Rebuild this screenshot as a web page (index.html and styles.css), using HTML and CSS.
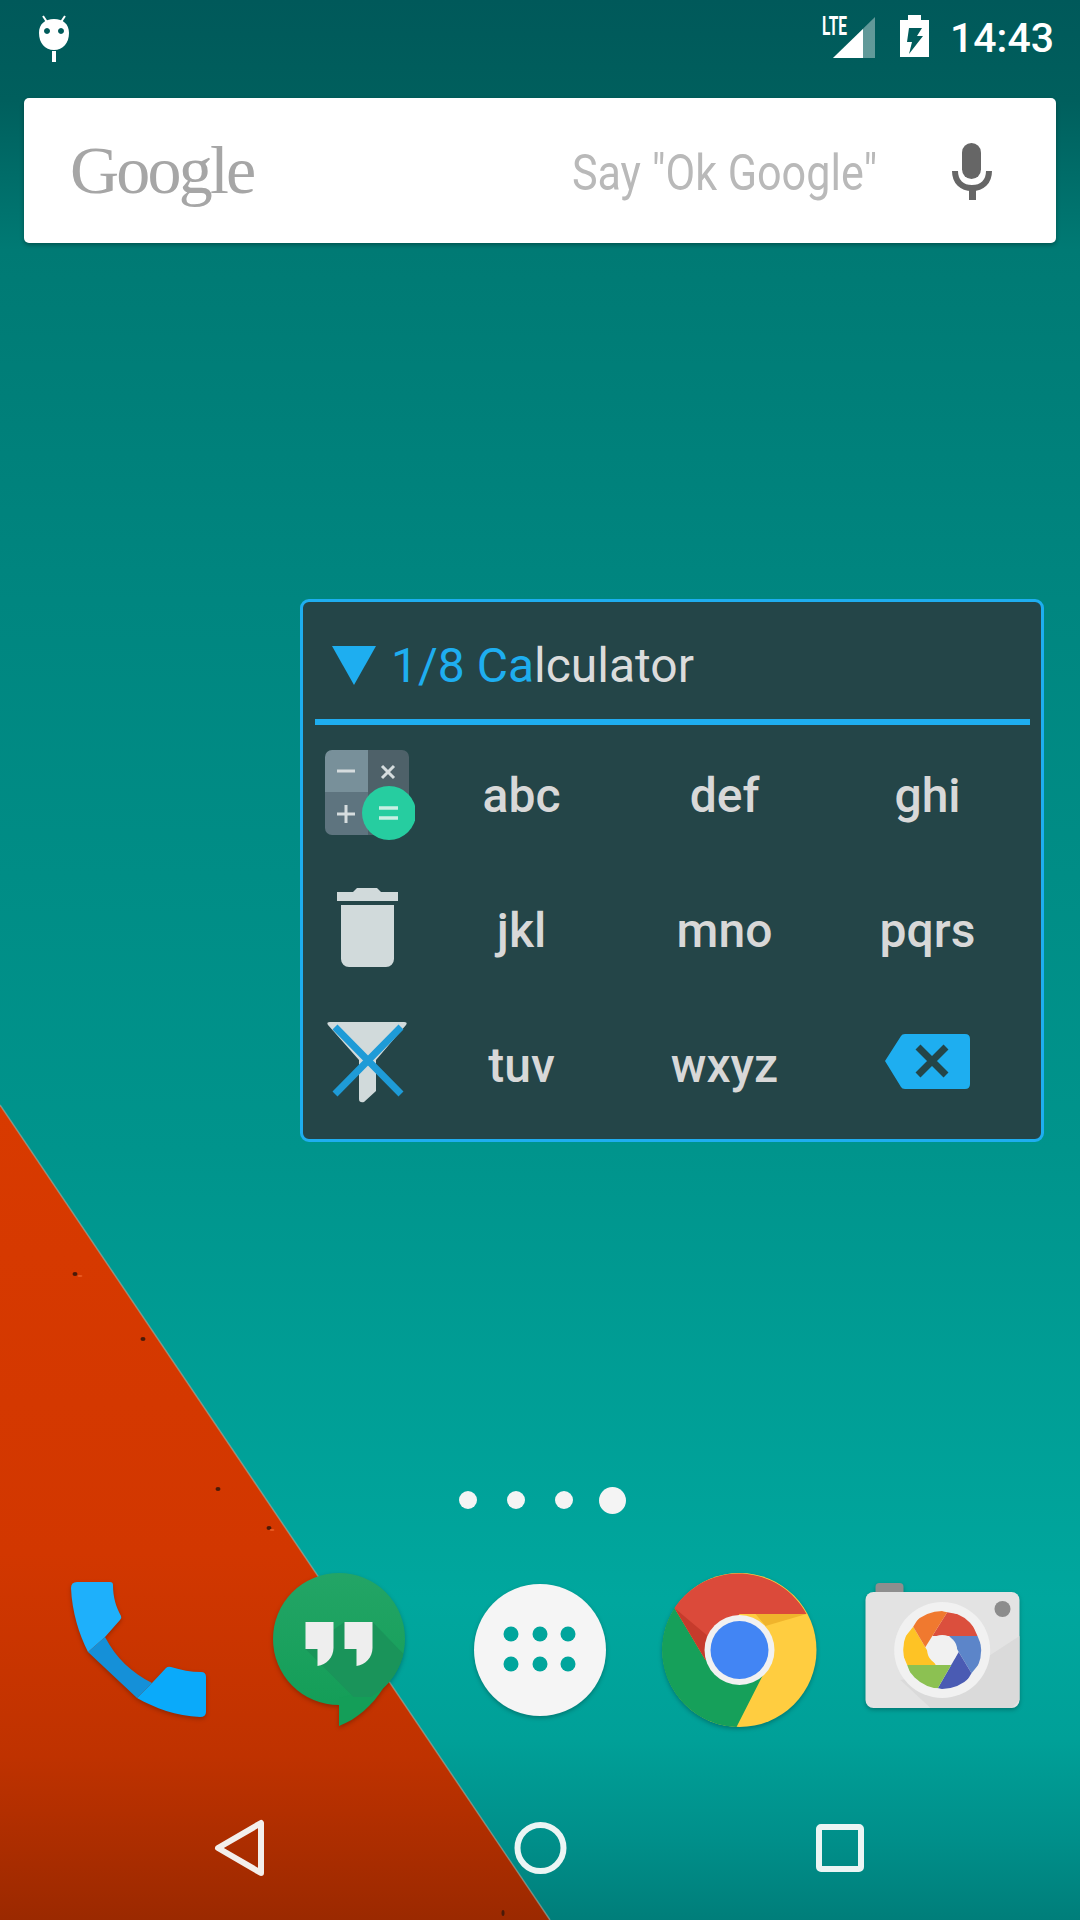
FILE: index.html
```html
<!DOCTYPE html>
<html lang="en">
<head>
  <meta charset="UTF-8" />
  <meta name="viewport" content="width=device-width, initial-scale=1.0" />
  <title>Home screen</title>
  <link rel="stylesheet" href="styles.css">
</head>
<body>
<div class="screen">

  <!-- wallpaper: red wedge, its edge and the rust specks -->
  <svg class="wallpaper" viewBox="0 0 1080 1920">
    <defs>
      <linearGradient id="redFade" gradientUnits="userSpaceOnUse" x1="0" y1="1105" x2="0" y2="1920">
        <stop offset="0" stop-color="#d83a00" />
        <stop offset="0.55" stop-color="#d23700" />
        <stop offset="0.8" stop-color="#bf3200" />
        <stop offset="1" stop-color="#9b2900" />
      </linearGradient>
    </defs>
    <polygon points="0,1105 550,1920 0,1920" fill="url(#redFade)" />
    <line x1="0" y1="1105" x2="550" y2="1920" stroke="#a9b7ad" stroke-opacity="0.55" stroke-width="1.5" />
    <g fill="#4a1a08">
      <ellipse cx="75" cy="1274" rx="2.5" ry="2" />
      <ellipse cx="143" cy="1339" rx="2.5" ry="2" />
      <ellipse cx="218" cy="1489" rx="2.5" ry="2" />
      <ellipse cx="269" cy="1528" rx="2.5" ry="2" />
      <ellipse cx="503" cy="1913" rx="1.5" ry="3" />
    </g>
    <g fill="#ea5a20">
      <ellipse cx="80" cy="1276" rx="2.5" ry="1" />
      <ellipse cx="272" cy="1530" rx="2.5" ry="1" />
    </g>
  </svg>

  <div class="statusbar">
    <svg class="status-android" viewBox="36 12 38 52">
      <path d="M43 16 l4 6 M65 16 l-4 6" stroke="#fff" stroke-width="2" />
      <path fill-rule="evenodd" fill="#fff" d="M54 19 c9 0 15 5 15 14 c0 10 -6 17 -15 17 c-9 0 -15 -7 -15 -17 c0 -9 6 -14 15 -14 z M47 28 a3 3 0 1 0 0.01 0 z M61 28 a3 3 0 1 0 0.01 0 z" />
      <rect x="52" y="51" width="4" height="11" fill="#fff" />
    </svg>
    <div class="status-right">
      <svg class="status-signal" viewBox="818 12 58 48">
        <polygon points="832,58 874,17 874,58" fill="#fff" fill-opacity="0.38" />
        <polygon points="832,58 862,29 862,58" fill="#fff" />
        <text class="lte-label" x="821" y="35" textLength="25" lengthAdjust="spacingAndGlyphs">LTE</text>
      </svg>
      <svg class="status-battery" viewBox="897 13 33 46">
        <path fill="#fff" fill-rule="evenodd" d="M907 15 h13 v5 h8 v37 h-29 v-37 h8 z M908 28 l-2 14 h5 l-3 12 l14 -18 h-6 l5 -8 z" />
      </svg>
      <span class="status-time">14:43</span>
    </div>
  </div>

  <div class="search-card">
    <span class="search-logo">Google</span>
    <span class="search-hint">Say "Ok Google"</span>
    <svg class="search-mic" viewBox="945 136 55 66">
      <rect x="962" y="141" width="19" height="36" rx="9.5" fill="#666" />
      <path d="M955 169 c0 11 7 17 17 17 s17 -6 17 -17" fill="none" stroke="#666" stroke-width="6" />
      <rect x="969" y="184" width="7" height="14" fill="#666" />
    </svg>
  </div>

  <div class="t9-panel">
    <div class="t9-title">
      <svg class="t9-arrow" viewBox="332 647 44 39"><polygon points="332,647 376,647 354,686" fill="#1eaef0" /></svg>
      <span class="t9-query"><span class="t9-match">1/8 Ca</span>lculator</span>
    </div>
    <div class="t9-rule"></div>
    <div class="t9-grid">
      <div class="t9-key">
        <svg class="t9-icon" viewBox="320 745 95 95">
          <defs>
            <clipPath id="calcBody"><rect x="325" y="750" width="84" height="85" rx="7" /></clipPath>
          </defs>
          <g clip-path="url(#calcBody)">
            <rect x="325" y="750" width="43" height="42" fill="#78909a" />
            <rect x="368" y="750" width="41" height="42" fill="#4e6169" />
            <rect x="325" y="792" width="43" height="43" fill="#5e747f" />
            <rect x="368" y="792" width="41" height="43" fill="#4e6169" />
          </g>
          <path d="M337 771 h18 M382 766 l12 12 M394 766 l-12 12 M337 814 h18 M346 805 v18" stroke="#d5dcde" stroke-width="3" fill="none" />
          <circle cx="389" cy="813" r="27" fill="#26cda0" />
          <path d="M379 808 h19 M379 818 h19" stroke="#c9efe3" stroke-width="3.5" />
        </svg>
      </div>
      <div class="t9-key">abc</div>
      <div class="t9-key">def</div>
      <div class="t9-key">ghi</div>
      <div class="t9-key">
        <svg class="t9-icon" viewBox="320 880 95 95">
          <path fill="#d1dadb" d="M337 892 h16 l4 -4 h20 l4 4 h17 v9 h-61 z M341 905 h53 v54 a8 8 0 0 1 -8 8 h-37 a8 8 0 0 1 -8 -8 z" />
        </svg>
      </div>
      <div class="t9-key">jkl</div>
      <div class="t9-key">mno</div>
      <div class="t9-key">pqrs</div>
      <div class="t9-key">
        <svg class="t9-icon" viewBox="320 1015 95 95">
          <path fill="#d1dadb" d="M330 1022 h74 q4 0 2 3 l-30 35 v31 l-12 11 q-5 1 -5 -3 v-39 l-31 -35 q-2 -3 2 -3 z" />
          <path d="M335 1027 l66 67 M401 1027 l-66 67" stroke="#1e9bd7" stroke-width="7" />
        </svg>
      </div>
      <div class="t9-key">tuv</div>
      <div class="t9-key">wxyz</div>
      <div class="t9-key">
        <svg class="t9-icon" viewBox="880 1015 95 95">
          <path fill="#1eaef0" d="M885 1061 l16 -25 q1 -2 4 -2 h60 q5 0 5 5 v45 q0 5 -5 5 h-60 q-3 0 -4 -2 z" />
          <path d="M918 1047 l28 28 M946 1047 l-28 28" stroke="#244548" stroke-width="7" />
        </svg>
      </div>
    </div>
  </div>

  <div class="pager">
    <span class="pager-dot"></span>
    <span class="pager-dot"></span>
    <span class="pager-dot"></span>
    <span class="pager-dot pager-dot-on"></span>
  </div>

  <div class="dock">
    <svg class="dock-icon" viewBox="58 1570 160 160">
      <path fill="#1590d8" d="M88 1652 l17 -15 c11 21 27 36 47 46 l-15 15 z" />
      <path fill="#1eb0fb" d="M77 1582 h33 q3 0 3 3 c0 12 3 22 8 31 q1 2 -1 4 l-15 17 l-17 15 c-9 -18 -16 -40 -17 -64 q0 -6 6 -6 z" />
      <path fill="#0aaafa" d="M137 1698 l15 -15 l14 -15 q2 -2 5 -1 c10 3 20 5 30 5 q5 0 5 5 v35 q0 5 -6 5 c-24 -1 -45 -9 -63 -19 z" />
    </svg>
    <svg class="dock-icon" viewBox="259.5 1570 160 160">
      <defs>
        <clipPath id="hangoutsDisc"><circle cx="339.5" cy="1639" r="66" /></clipPath>
        <linearGradient id="hangoutsFill" x1="0" y1="0" x2="0" y2="1">
          <stop offset="0" stop-color="#23a566" />
          <stop offset="1" stop-color="#149e58" />
        </linearGradient>
      </defs>
      <circle cx="339.5" cy="1639" r="66" fill="url(#hangoutsFill)" />
      <path fill="#149e58" d="M339.5 1698 v28 c18 -7 33 -20 45 -39 z" />
      <polygon clip-path="url(#hangoutsDisc)" points="306,1649 354,1697 410,1697 410,1660 373,1622 345,1622" fill="#1a945a" />
      <path fill="#eeeeee" d="M306 1622 h28 v26 c0 9 -7 17 -16 18 v-17 h-12 z M345 1622 h28 v26 c0 9 -7 17 -16 18 v-17 h-12 z" />
    </svg>
    <svg class="dock-icon" viewBox="460 1570 160 160">
      <circle cx="540" cy="1650" r="66" fill="#f5f5f5" />
      <g fill="#00a59c">
        <circle cx="511" cy="1634" r="7.5" />
        <circle cx="540" cy="1634" r="7.5" />
        <circle cx="568" cy="1634" r="7.5" />
        <circle cx="511" cy="1664" r="7.5" />
        <circle cx="540" cy="1664" r="7.5" />
        <circle cx="568" cy="1664" r="7.5" />
      </g>
    </svg>
    <svg class="dock-icon" viewBox="660.5 1570 160 160">
      <circle cx="739" cy="1650" r="77" fill="#ffcd40" />
      <path fill="#16a05a" d="M674 1608 l31 52 l60 10 l-29 57 a77 77 0 0 1 -62 -119 z" />
      <path fill="#db4a3a" d="M674 1608 a77 77 0 0 1 132 6 h-67 l-34 46 z" />
      <polygon points="674,1608 705,1660 712,1640" fill="#c63b2c" />
      <polygon points="755,1614 806,1614 765,1626" fill="#f0b42c" />
      <circle cx="739" cy="1650" r="35" fill="#f1f1f1" />
      <circle cx="739" cy="1650" r="29" fill="#4285f4" />
    </svg>
    <svg class="dock-icon" viewBox="861.5 1570 160 160">
      <defs>
        <clipPath id="camLens"><circle cx="941.7" cy="1650" r="39" /></clipPath>
      </defs>
      <rect x="875" y="1583" width="28" height="14" rx="4" fill="#8e8e8e" />
      <rect x="865" y="1592" width="154" height="116" rx="8" fill="#e3e3e3" />
      <polygon points="970,1668 1019,1636 1019,1700 1011,1708 930,1708 900,1680" fill="#dadada" />
      <circle cx="1002" cy="1609" r="8" fill="#8c8c8c" />
      <circle cx="941.7" cy="1650" r="48" fill="#f1f1f1" />
      <g clip-path="url(#camLens)">
        <polygon points="946.7,1612.3 968,1616 977,1636 931.8,1636" fill="#db4f3d" />
        <polygon points="977,1636 985,1656 971,1673.3 948.7,1636" fill="#5c85c9" />
        <polygon points="971,1673.3 959,1693 937.3,1688.3 958.2,1651.9" fill="#4a5bb3" />
        <polygon points="937.3,1688.3 915,1688 906.7,1665 950.7,1665" fill="#8cc152" />
        <polygon points="906.7,1665 898,1645 912.7,1626.7 935.2,1665" fill="#fec325" />
        <polygon points="912.7,1626.7 925,1607 946.7,1612.3 924.8,1647.3" fill="#f0792f" />
      </g>
      <circle cx="941.7" cy="1650" r="15" fill="#f1f1f1" />
    </svg>
  </div>

  <div class="navbar">
    <svg class="nav-icon nav-back" viewBox="210 1818 60 60">
      <path d="M261 1823 v50 l-43 -25 z" fill="none" stroke="#f3efec" stroke-width="6" stroke-linejoin="round" />
    </svg>
    <svg class="nav-icon nav-home" viewBox="510 1818 60 60">
      <circle cx="540.5" cy="1848" r="23" fill="none" stroke="#ebf5f4" stroke-width="6" />
    </svg>
    <svg class="nav-icon nav-recent" viewBox="810 1818 60 60">
      <rect x="819" y="1827" width="42" height="42" rx="2" fill="none" stroke="#ebf5f4" stroke-width="6" />
    </svg>
  </div>

</div>
</body>
</html>
```

FILE: styles.css
```css
body {
  margin: 0;
  font-family: Roboto, "Noto Sans", sans-serif;
}

.screen {
  position: relative;
  width: 1080px;
  height: 1920px;
  overflow: hidden;
  background: linear-gradient(to bottom,
    #00595a 0, #005f5d 100px, #007a74 250px, #008680 600px,
    #00948c 1150px, #00a79e 1600px, #00a098 1740px, #008f8a 1840px, #007e7a 1920px);
}

.wallpaper {
  position: absolute;
  top: 0;
  left: 0;
  width: 1080px;
  height: 1920px;
}

.statusbar, .search-card, .t9-panel, .pager, .dock, .navbar {
  position: relative;
}

/* status bar */
.statusbar {
  display: flex;
  justify-content: space-between;
  height: 86px;
  padding: 12px 26px 0 36px;
}

.status-android {
  width: 38px;
  height: 52px;
}

.status-right {
  display: flex;
  align-items: flex-start;
}

.status-signal {
  width: 58px;
  height: 48px;
}

.lte-label {
  font-family: Roboto, sans-serif;
  font-weight: 700;
  font-size: 25px;
  fill: #fff;
}

.status-battery {
  width: 33px;
  height: 46px;
  margin: 1px 0 0 21px;
}

.status-time {
  margin: 2px 0 0 19px;
  font-size: 41px;
  font-weight: 500;
  line-height: 48px;
  color: #fff;
}

/* search widget */
.search-card {
  display: flex;
  align-items: center;
  height: 145px;
  margin: 0 24px;
  padding: 0 56px 0 46px;
  background: #fff;
  border-radius: 5px;
  box-shadow: 0 2px 4px rgba(0,0,0,0.3);
}

.search-logo {
  font-family: "Liberation Serif", serif;
  font-size: 68px;
  letter-spacing: -2.8px;
  color: #a6a6a6;
}

.search-hint {
  margin: 5px 0 0 auto;
  font-size: 50px;
  color: #b9b9b9;
  white-space: nowrap;
  transform: scaleX(0.862);
  transform-origin: right center;
}

.search-mic {
  width: 55px;
  height: 66px;
  margin-left: 68px;
}

/* T9 launcher panel */
.t9-panel {
  box-sizing: border-box;
  width: 744px;
  height: 543px;
  margin: 356px 0 0 300px;
  padding: 0 11px 0 12px;
  background: #244548;
  border: 3px solid #1eaef0;
  border-radius: 9px;
}

.t9-title {
  box-sizing: border-box;
  display: flex;
  align-items: center;
  height: 117px;
  padding: 10px 0 0 17px;
  font-size: 48px;
  color: #dcdcdc;
}

.t9-arrow {
  width: 44px;
  height: 39px;
  margin-right: 15px;
}

.t9-match {
  color: #1eaef0;
}

.t9-rule {
  height: 6px;
  background: #1eaef0;
}

.t9-grid {
  display: grid;
  grid-template-columns: 105px repeat(3, 203px);
  grid-auto-rows: 135px;
  margin-top: 3px;
}

.t9-key {
  display: flex;
  align-items: center;
  justify-content: center;
  font-size: 48px;
  font-weight: 500;
  color: #d8d8d8;
}

.t9-icon {
  width: 95px;
  height: 95px;
  margin-bottom: 7px;
  flex: none;
}

/* workspace dots */
.pager {
  display: flex;
  align-items: center;
  height: 28px;
  margin-top: 344px;
  padding-left: 459px;
}

.pager-dot {
  width: 18px;
  height: 18px;
  margin-right: 30px;
  border-radius: 50%;
  background: #f4f4f4;
}

.pager-dot-on {
  width: 27px;
  height: 27px;
  margin-left: -4px;
}

/* dock */
.dock {
  display: flex;
  height: 160px;
  margin-top: 56px;
  padding-left: 58px;
}

.dock-icon {
  width: 160px;
  height: 160px;
  margin-right: 41px;
  flex: none;
  filter: drop-shadow(0 2px 2px rgba(0,0,0,0.25));
}

/* nav bar */
.navbar {
  display: flex;
  height: 60px;
  margin-top: 88px;
  padding-left: 210px;
}

.nav-icon {
  width: 60px;
  height: 60px;
  margin-right: 240px;
  flex: none;
}
```
